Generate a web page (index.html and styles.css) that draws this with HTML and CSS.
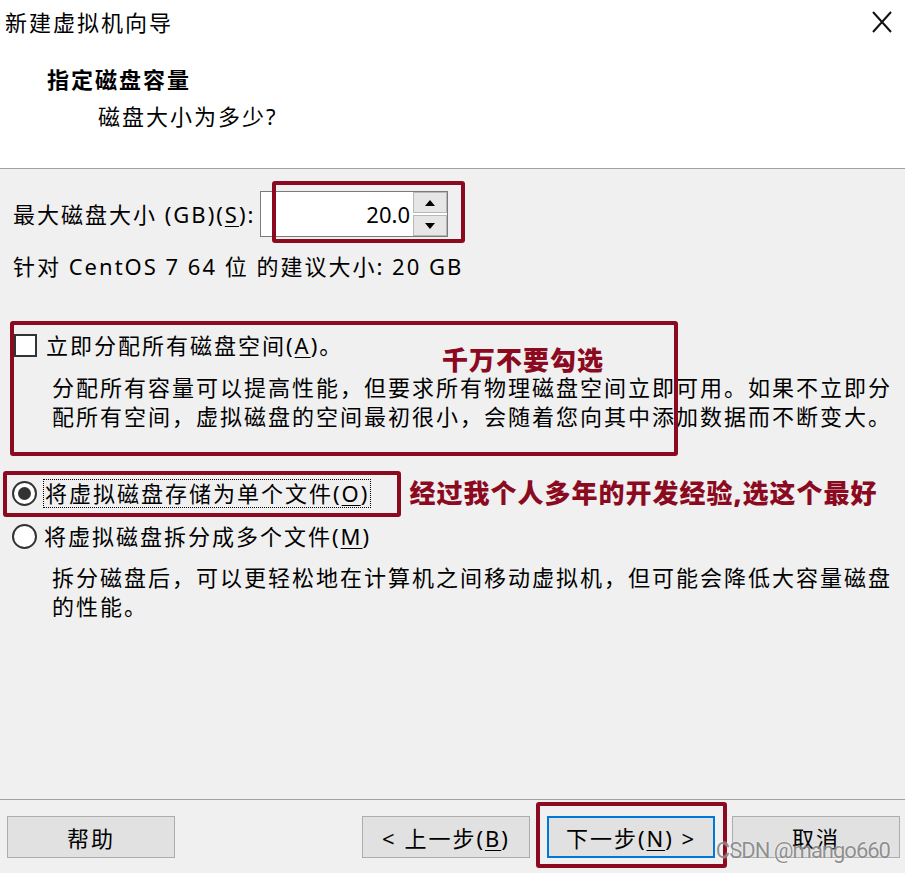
FILE: index.html
```html
<!DOCTYPE html>
<html lang="zh-CN">
<head>
    <meta charset="UTF-8">
    <title>新建虚拟机向导</title>
    <link rel="stylesheet" href="styles.css">
</head>
<body>
<div class="header">
    <div class="titlebar">
        <span class="title">新建虚拟机向导</span>
        <svg class="close" width="22" height="22" viewBox="0 0 22 22">
            <path d="M2 1 L20 21 M20 1 L2 21" stroke="#111" stroke-width="2" fill="none"/>
        </svg>
    </div>
    <div class="heading">指定磁盘容量</div>
    <div class="subheading">磁盘大小为多少?</div>
</div>

<div class="content">
    <div class="size-row">
        <span class="size-label">最大磁盘大小 (GB)(<u>S</u>):</span>
        <div class="spinner">
            <div class="spin-value">20.0</div>
            <div class="spin-btns">
                <div class="spin-btn"><span class="arrow-up"></span></div>
                <div class="spin-btn"><span class="arrow-down"></span></div>
            </div>
            <div class="mark mark-spinner"></div>
        </div>
    </div>

    <div class="recommend">针对 CentOS 7 64 位 的建议大小: 20 GB</div>

    <div class="allocate">
        <div class="option-row">
            <span class="checkbox"></span>
            <span class="option-label">立即分配所有磁盘空间(<u>A</u>)。</span>
        </div>
        <div class="desc">分配所有容量可以提高性能，但要求所有物理磁盘空间立即可用。如果不立即分<br>配所有空间，虚拟磁盘的空间最初很小，会随着您向其中添加数据而不断变大。</div>
        <div class="note note-warn">千万不要勾选</div>
        <div class="mark mark-allocate"></div>
    </div>

    <div class="option-row radio-first">
        <span class="radio checked"></span>
        <span class="option-label focused">将虚拟磁盘存储为单个文件(<u>O</u>)</span>
        <span class="note note-tip">经过我个人多年的开发经验,选这个最好</span>
        <div class="mark mark-radio"></div>
    </div>

    <div class="option-row radio-second">
        <span class="radio"></span>
        <span class="option-label">将虚拟磁盘拆分成多个文件(<u>M</u>)</span>
    </div>
    <div class="desc desc-split">拆分磁盘后，可以更轻松地在计算机之间移动虚拟机，但可能会降低大容量磁盘<br>的性能。</div>
</div>

<div class="footer">
    <button class="btn btn-help">帮助</button>
    <div class="spacer"></div>
    <button class="btn">&lt; 上一步(<u>B</u>)</button>
    <button class="btn btn-next">下一步(<u>N</u>) &gt;<span class="mark mark-next"></span></button>
    <button class="btn">取消</button>
    <span class="watermark">CSDN @mango660</span>
</div>
</body>
</html>
```

FILE: styles.css
```css
* {
    box-sizing: border-box;
}

body {
    margin: 0;
    width: 905px;
    height: 873px;
    overflow: hidden;
    display: flex;
    flex-direction: column;
    background: #f0f0f0;
    font-family: "Noto Sans", "Noto Sans CJK SC", sans-serif;
    font-size: 22px;
    letter-spacing: 2px;
    line-height: 29px;
    color: #000;
}

u {
    text-decoration-thickness: 1px;
    text-underline-offset: 3px;
}

/* header */

.header {
    height: 169px;
    background: #fff;
    border-bottom: 1px solid #a0a0a0;
}

.titlebar {
    height: 44px;
    display: flex;
    align-items: center;
    justify-content: space-between;
    padding: 0 12px 0 5px;
}

.heading {
    margin-top: 21px;
    padding-left: 47px;
    font-weight: bold;
}

.subheading {
    margin-top: 8px;
    padding-left: 98px;
}

/* content */

.content {
    flex: 1;
    padding: 22px 0 0 13px;
}

.size-row {
    display: flex;
    align-items: center;
}

.size-label {
    width: 247px;
}

.spinner {
    position: relative;
    width: 188px;
    height: 46px;
    display: flex;
    background: #fff;
    border: 1px solid #7a7a7a;
}

.spin-value {
    flex: 1;
    text-align: right;
    padding-right: 3px;
    line-height: 44px;
    letter-spacing: 0;
}

.spin-btns {
    width: 34px;
    display: flex;
    flex-direction: column;
    gap: 2px;
}

.spin-btn {
    flex: 1;
    display: flex;
    align-items: center;
    justify-content: center;
    background: #e6e6e6;
    border: 1px solid #b9b9b9;
}

.arrow-up,
.arrow-down {
    width: 0;
    height: 0;
    border-left: 5px solid transparent;
    border-right: 5px solid transparent;
}

.arrow-up {
    border-bottom: 6px solid #000;
}

.arrow-down {
    border-top: 6px solid #000;
}

.recommend {
    margin-top: 15px;
}

.allocate {
    position: relative;
    margin-top: 50px;
}

.option-row {
    position: relative;
    display: flex;
    align-items: center;
}

.checkbox {
    width: 23px;
    height: 23px;
    margin-left: 1px;
    border: 2px solid #333;
    background: #fff;
}

.option-label {
    margin-left: 9px;
}

.desc {
    margin-top: 13px;
    padding-left: 39px;
    white-space: nowrap;
}

.radio {
    width: 25px;
    height: 25px;
    margin-left: -1px;
    border: 2px solid #333;
    border-radius: 50%;
    background: #fff;
    display: flex;
    align-items: center;
    justify-content: center;
}

.radio.checked::after {
    content: "";
    width: 13px;
    height: 13px;
    border-radius: 50%;
    background: #333;
}

.radio-first {
    margin-top: 48px;
}

.radio-first .option-label {
    margin-left: 6px;
}

.focused {
    border: 1px dotted #000;
    padding: 0 1px;
    line-height: 27px;
}

.radio-second {
    margin-top: 14px;
}

.radio-second .option-label {
    margin-left: 7px;
}

.desc-split {
    margin-top: 12px;
}

/* annotations */

.mark {
    position: absolute;
    border: 4px solid #8b0a1f;
    border-radius: 3px;
    pointer-events: none;
}

.mark-spinner {
    left: 11px;
    top: -11px;
    width: 193px;
    height: 62px;
}

.mark-allocate {
    left: -3px;
    top: -10px;
    width: 668px;
    height: 135px;
}

.mark-radio {
    left: -10px;
    top: -8px;
    width: 398px;
    height: 46px;
}

.note {
    color: #8b0a1f;
    font-size: 26px;
    font-weight: 900;
    letter-spacing: 1px;
}

.note-warn {
    position: absolute;
    left: 429px;
    top: 15px;
}

.note-tip {
    margin-left: 38px;
}

/* footer */

.footer {
    position: relative;
    height: 74px;
    display: flex;
    align-items: flex-start;
    gap: 17px;
    padding: 16px 5px 0 7px;
    border-top: 1px solid #a0a0a0;
}

.spacer {
    flex: 1;
}

.btn {
    position: relative;
    width: 168px;
    height: 42px;
    padding: 0;
    background: #e1e1e1;
    border: 1px solid #adadad;
    font-family: inherit;
    font-size: 22px;
    letter-spacing: 2px;
    color: #000;
}

.btn-next {
    border: 2px solid #0078d7;
}

.mark-next {
    left: -13px;
    top: -16px;
    width: 191px;
    height: 66px;
}

.watermark {
    position: absolute;
    right: 15px;
    top: 36px;
    font-family: "Roboto", sans-serif;
    font-size: 22px;
    letter-spacing: -1px;
    color: rgba(110, 110, 110, 0.75);
    text-shadow: 0 0 2px rgba(255, 255, 255, 0.9);
    pointer-events: none;
}
```
